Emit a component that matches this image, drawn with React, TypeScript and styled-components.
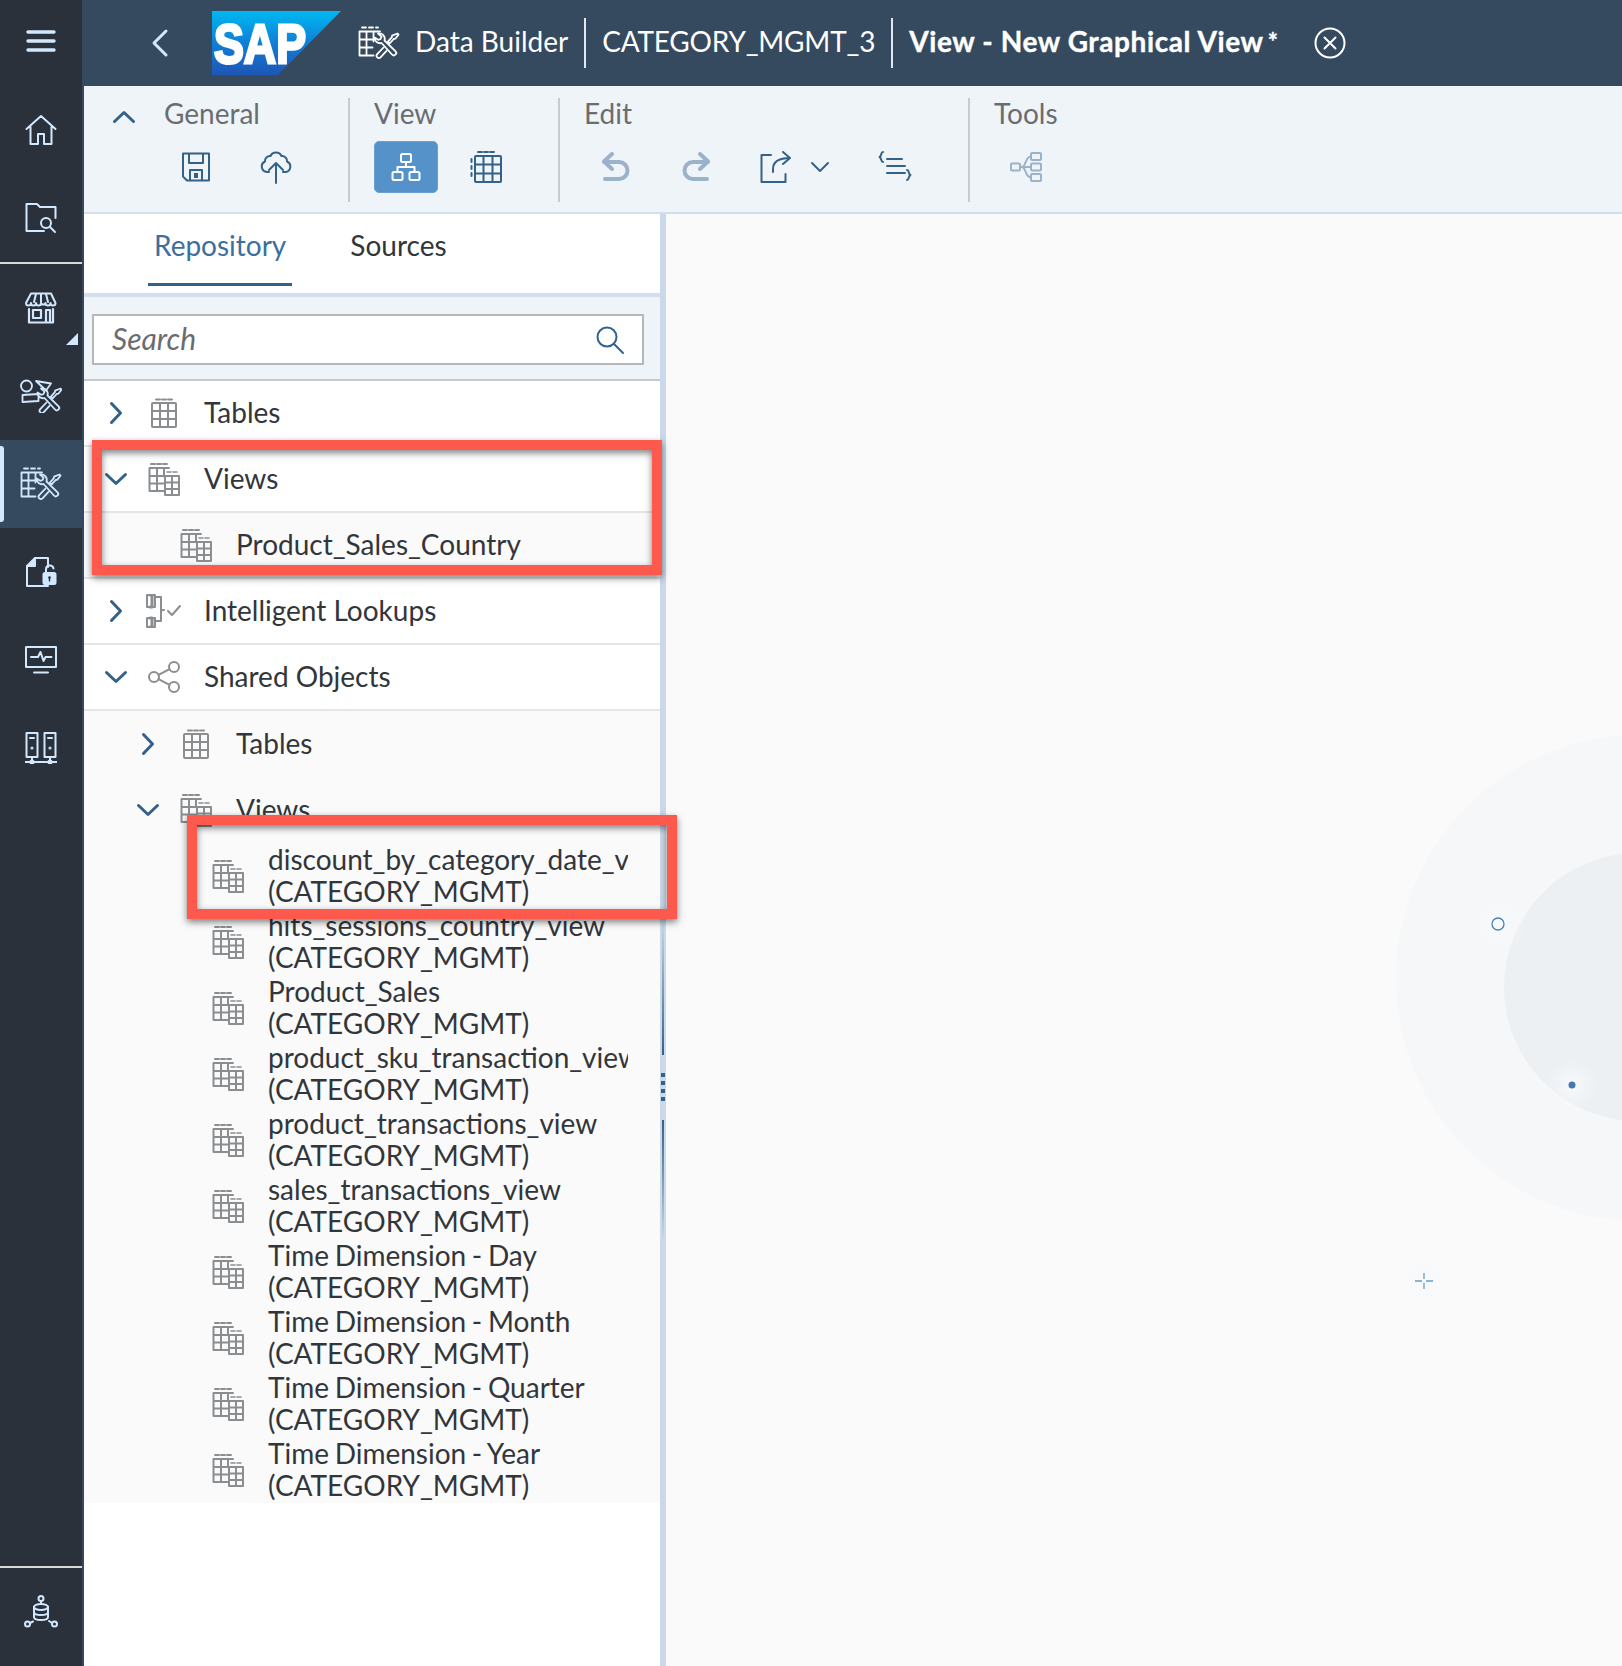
import React from 'react';
import styled, { createGlobalStyle } from 'styled-components';

const GlobalStyle = createGlobalStyle`
  html, body { margin: 0; padding: 0; background: #fff; }
  body { font-family: Lato, 'Noto Sans', 'Liberation Sans', sans-serif; color: #32363a; }
  * { box-sizing: border-box; }
`;

const Glyph: React.FC<{ w: number; h: number; vb?: string; sw?: number; children: React.ReactNode }> = ({ w, h, vb, sw = 2, children }) => (
  <svg width={w} height={h} viewBox={vb || `0 0 ${w} ${h}`} fill="none" stroke="currentColor" strokeWidth={sw} strokeLinecap="round" strokeLinejoin="round">
    {children}
  </svg>
);

/* wrench + screwdriver, drawn in a 26 box */
const ToolsShape = () => (
  <>
    <path d="M1.500 5.500a5.500 5.500 0 0 0 7 5.500L19 22.500a2.400 2.400 0 0 0 3.600-3.200L11.500 8.500a5.500 5.500 0 0 0-6.500-7l3.500 3.200-.9 2.300-2.300.8z" />
    <path d="M24.500 1.500l1 1.200-3.200 4-1.600.3-4 4.400-1.800-1.800 4-4.400.2-1.500zM10.500 15.500l-6.300 6.700a2.300 2.300 0 0 0 3.300 3.200l6-6.500" />
  </>
);

const BuilderIcon: React.FC<{ w?: number; h?: number }> = ({ w = 42, h = 34 }) => (
  <Glyph w={w} h={h} vb="0 0 42 34" sw={1.8}>
    <path d="M4 1.500h4M11 1.500h4M18 1.500h2" />
    <path d="M22 5.500H1.500v24h14M1.500 13.500h16M1.500 21.500h13M8.500 5.500v24M15.500 5.500v10" />
    <g transform="translate(15 6)"><ToolsShape /></g>
  </Glyph>
);

const TableIcon: React.FC<{ w?: number; h?: number }> = ({ w = 26, h = 30 }) => (
  <Glyph w={w} h={h} vb="0 0 26 30">
    <path d="M5 1.500h4M11 1.500h4M17 1.500h4" />
    <rect x="1" y="5" width="24" height="24" rx="1" />
    <path d="M9 5v24M17 5v24M1 13h24M1 21h24" />
  </Glyph>
);

const ViewIcon = () => (
  <Glyph w={32} h={34} vb="0 0 32 34">
    <path d="M3 2h4M9 2h4M15 2h4" />
    <path d="M21 6H1.500v23h14M1.500 14h15M1.500 21.500h14M9 6v23M16 6v8" />
    <path d="M19 10h4M25 10h4" strokeWidth="1.600" />
    <rect x="17" y="14" width="14" height="19" />
    <path d="M24 14v19M17 20.500h14M17 27h14" />
  </Glyph>
);

const LookupIcon = () => (
  <Glyph w={36} h={34} vb="0 0 36 34">
    <rect x="1" y="1" width="8" height="12" />
    <rect x="1" y="24" width="8" height="9" />
    <path d="M4 1h2v12H4M4 24h2v9H4" strokeWidth="3" />
    <path d="M9 3h6v24H9M15 16h3" />
    <path d="M22 17l4 4 8-9" />
  </Glyph>
);

const ShareIcon = () => (
  <Glyph w={32} h={32}>
    <circle cx="6" cy="16" r="5" />
    <circle cx="26" cy="6" r="5" />
    <circle cx="26" cy="26" r="5" />
    <path d="M10.500 13.800L21.500 8.200M10.500 18.200l11 5.600" />
  </Glyph>
);

const ChevronRight = () => (
  <Glyph w={14} h={24} sw={3}><path d="M2.500 2.500l9 9.500-9 9.500" /></Glyph>
);
const ChevronDown = () => (
  <Glyph w={24} h={14} sw={3}><path d="M2.500 2.500l9.500 9 9.500-9" /></Glyph>
);

const navIcons: React.ReactNode[] = [
  <Glyph key="home" w={32} h={32} vb="0 0 32 32">
    <path d="M1.500 15L16 2l14.500 13M5.500 13v17H13V20h6v10h7.500V13" />
  </Glyph>,
  <Glyph key="folder" w={32} h={32}>
    <path d="M19 29H1.500V2H12l3 3h15.500v11" />
    <circle cx="21" cy="21" r="5" />
    <path d="M25 25l5 5" />
  </Glyph>,
  <Glyph key="store" w={32} h={32}>
    <path d="M6 1.500h20l4.500 9.500a2.500 2.500 0 0 1-5 0 2.500 2.500 0 0 1-5 0 2.500 2.500 0 0 1-4.500 0 2.500 2.500 0 0 1-5 0 2.500 2.500 0 0 1-5 0 2.500 2.500 0 0 1-5 0zM11 2L9 10M16 2v8M21 2l2 8" />
    <path d="M4 17v13.500h24V17M8 18v8h8v-8zM21 30V18h4v12" strokeWidth="2.200" />
  </Glyph>,
  <Glyph key="modeler" w={42} h={34} vb="0 0 42 34" sw={1.800}>
    <circle cx="6.500" cy="7" r="5.500" />
    <path d="M16 2l15 2.500-5 7zM2.500 16l16-1v7l-16 1z" />
    <g transform="translate(16 8)"><ToolsShape /></g>
  </Glyph>,
  <BuilderIcon key="builder" />,
  <Glyph key="lock" w={32} h={32}>
    <path d="M23 11V2H10L2 10v20h21" />
    <path d="M2 10h8V2" fill="currentColor" />
    <rect x="18.500" y="17" width="12" height="11" rx="1.500" fill="currentColor" />
    <path d="M21 17v-3.500a3.800 3.800 0 0 1 7.500-1" />
    <circle cx="24.500" cy="21.500" r="1.300" fill="#2a313b" stroke="none" />
    <path d="M24.500 22v3" stroke="#2a313b" strokeWidth="1.400" />
  </Glyph>,
  <Glyph key="monitor" w={32} h={28}>
    <rect x="1" y="1" width="30" height="20" />
    <path d="M6 11h7l2.500-5 3 9 2-4h6M9 26.500h14" />
  </Glyph>,
  <Glyph key="servers" w={32} h={32}>
    <rect x="1.500" y="1" width="11" height="24" />
    <rect x="19.500" y="1" width="11" height="24" />
    <path d="M5 6h4M23 6h4M0 30h32M7 25v5M25 25v5" />
    <circle cx="7" cy="16" r=".6" />
    <circle cx="25" cy="16" r=".6" />
    <circle cx="7" cy="30" r="1.600" fill="currentColor" />
    <circle cx="25" cy="30" r="1.600" fill="currentColor" />
  </Glyph>,
];

const items = [
  'discount_by_category_date_view',
  'hits_sessions_country_view',
  'Product_Sales',
  'product_sku_transaction_view',
  'product_transactions_view',
  'sales_transactions_view',
  'Time Dimension - Day',
  'Time Dimension - Month',
  'Time Dimension - Quarter',
  'Time Dimension - Year',
];

const App: React.FC = () => (
  <Shell>
    <GlobalStyle />
    <Sidebar>
      <Burger>
        <Glyph w={30} h={24} sw={3.4}><path d="M2 3h26M2 12h26M2 21h26" /></Glyph>
      </Burger>
      {navIcons.map((icon, i) => (
        <NavItem key={i} $active={i === 4} $divided={i === 1} $flag={i === 2}>
          {icon}
        </NavItem>
      ))}
      <SideFooter>
        <Glyph w={34} h={34} sw={2}>
          <circle cx="17" cy="3.500" r="2.500" />
          <path d="M17 6v3" />
          <ellipse cx="17" cy="12" rx="7" ry="3" />
          <path d="M10 12v10c0 4 14 4 14 0V12M10 17c0 4 14 4 14 0" />
          <circle cx="3.500" cy="29" r="2.500" />
          <circle cx="30.500" cy="29" r="2.500" />
          <path d="M6 28l3-1.500M28 28l-3-2" />
        </Glyph>
      </SideFooter>
    </Sidebar>

    <Main>
      <Header>
        <BackButton>
          <Glyph w={20} h={30} sw={3}><path d="M16 3L4 15l12 12" /></Glyph>
        </BackButton>
        <Logo viewBox="0 0 130 64" width="130" height="64">
          <defs>
            <linearGradient id="sapGrad" x1="0" y1="0" x2="0" y2="1">
              <stop offset="0" stopColor="#00b8f1" />
              <stop offset="0.5" stopColor="#0f7fd6" />
              <stop offset="1" stopColor="#1e56b5" />
            </linearGradient>
          </defs>
          <polygon points="0,0 129,0 66,64 0,64" fill="url(#sapGrad)" />
          <text x="2" y="52" fontFamily="'Liberation Sans', sans-serif" fontWeight="700" fontSize="56" fill="#fff" stroke="#fff" strokeWidth="3" textLength="92" lengthAdjust="spacingAndGlyphs">SAP</text>
        </Logo>
        <HeaderIcon><BuilderIcon /></HeaderIcon>
        <Crumb>Data Builder</Crumb>
        <Crumb $sep $tight>CATEGORY_MGMT_3</Crumb>
        <Crumb $sep $bold>View - New Graphical View<Star>*</Star></Crumb>
        <CloseButton>
          <Glyph w={32} h={32}>
            <circle cx="16" cy="16" r="14.500" />
            <path d="M10.500 10.500l11 11M21.500 10.500l-11 11" />
          </Glyph>
        </CloseButton>
      </Header>

      <Toolbar>
        <Collapse>
          <Glyph w={24} h={14} sw={3}><path d="M2.500 11.500l9.500-9 9.500 9" /></Glyph>
        </Collapse>
        <ToolGroup $width={184} $first>
          <ToolLabel>General</ToolLabel>
          <ToolRow>
            <ToolButton>
              <Glyph w={30} h={30}>
                <path d="M2 1.500h26v27H6l-4-4zM8 2v9h14V2M9 28v-10h12v10" />
                <rect x="13" y="21" width="4" height="5" fill="currentColor" stroke="none" />
              </Glyph>
            </ToolButton>
            <ToolButton>
              <Glyph w={32} h={34}>
                <path d="M9 22H7a5.500 5.500 0 0 1-2-10.500A5 5 0 0 1 10.500 6a6 6 0 0 1 11 0 5 5 0 0 1 5.500 5.500A5.500 5.500 0 0 1 25.500 22H23" />
                <path d="M16 33V13M9 20l7-7 7 7" />
              </Glyph>
            </ToolButton>
          </ToolRow>
        </ToolGroup>
        <ToolGroup $width={210}>
          <ToolLabel>View</ToolLabel>
          <ToolRow>
            <ToolButton $active>
              <Glyph w={30} h={30}>
                <rect x="10" y="2" width="10" height="8" rx="1.500" />
                <rect x="1.500" y="20" width="10" height="8" rx="1.500" />
                <rect x="18.500" y="20" width="10" height="8" rx="1.500" />
                <path d="M15 10v5M6.500 20v-5h17v5" />
              </Glyph>
            </ToolButton>
            <ToolButton>
              <Glyph w={32} h={34}>
                <path d="M8 2h4M14 2h4M20 2h4M1.500 9v3M1.500 16v3M1.500 23v3" />
                <rect x="5" y="6" width="26" height="26" rx="1" />
                <path d="M13.500 6v26M22.500 6v26M5 14.500h26M5 23.500h26" />
              </Glyph>
            </ToolButton>
          </ToolRow>
        </ToolGroup>
        <ToolGroup $width={410}>
          <ToolLabel>Edit</ToolLabel>
          <ToolRow>
            <ToolButton $disabled>
              <Glyph w={30} h={30} sw={4}>
                <path d="M11 2L3 9.500l8 7.500M3 10h15a8.500 8.500 0 0 1 0 17H4" />
              </Glyph>
            </ToolButton>
            <ToolButton $disabled>
              <Glyph w={30} h={30} sw={4}>
                <path d="M19 2l8 7.500-8 7.500M27 10H12a8.500 8.500 0 0 0 0 17h14" />
              </Glyph>
            </ToolButton>
            <SplitButton>
              <SplitIcon>
                <Glyph w={32} h={32}>
                  <path d="M11 4H1.500v27h24v-8" />
                  <path d="M13 21v-3c0-7 5-11 17-11M23 1l7 6-7 6" />
                </Glyph>
              </SplitIcon>
              <Glyph w={20} h={12} sw={2}><path d="M2 2l8 8 8-8" /></Glyph>
            </SplitButton>
            <ToolButton>
              <Glyph w={34} h={32}>
                <path d="M5 1C2.500 1 4 5 1.500 6 4 7 2.500 11 5 11M9 8h15M9 15h18M9 22h18M29 19c2.500 0 1 4 3.500 5-2.500 1-1 5-3.500 5" />
              </Glyph>
            </ToolButton>
          </ToolRow>
        </ToolGroup>
        <ToolGroup $width={220}>
          <ToolLabel>Tools</ToolLabel>
          <ToolRow>
            <ToolButton $disabled>
              <Glyph w={32} h={32}>
                <rect x="1" y="12.500" width="9" height="7" rx="1" />
                <rect x="21" y="2" width="10" height="7" rx="1" />
                <rect x="21" y="12.500" width="10" height="7" rx="1" />
                <rect x="21" y="23" width="10" height="7" rx="1" />
                <path d="M10 16h11M21 5.500c-6 0-5 10.500-9 10.500 4 0 3 10.500 9 10.500" />
              </Glyph>
            </ToolButton>
          </ToolRow>
        </ToolGroup>
      </Toolbar>

      <Body>
        <Panel>
          <Tabs>
            <Tab $active>Repository</Tab>
            <Tab>Sources</Tab>
          </Tabs>
          <SearchBar>
            <SearchField>
              <SearchText>Search</SearchText>
              <SearchIcon>
                <Glyph w={30} h={30}>
                  <circle cx="12" cy="12" r="9.500" />
                  <path d="M19 19l9 9" />
                </Glyph>
              </SearchIcon>
            </SearchField>
          </SearchBar>

          <Row $divider>
            <Caret><ChevronRight /></Caret>
            <RowIcon><TableIcon /></RowIcon>
            <RowLabel>Tables</RowLabel>
          </Row>
          <Row $divider>
            <Caret><ChevronDown /></Caret>
            <RowIcon><ViewIcon /></RowIcon>
            <RowLabel>Views</RowLabel>
          </Row>
          <Row $level={1} $child $divider>
            <Caret />
            <RowIcon><ViewIcon /></RowIcon>
            <RowLabel>Product_Sales_Country</RowLabel>
          </Row>
          <Row $divider>
            <Caret><ChevronRight /></Caret>
            <RowIcon><LookupIcon /></RowIcon>
            <RowLabel>Intelligent Lookups</RowLabel>
          </Row>
          <Row $divider>
            <Caret><ChevronDown /></Caret>
            <RowIcon><ShareIcon /></RowIcon>
            <RowLabel>Shared Objects</RowLabel>
          </Row>
          <Row $level={1} $child>
            <Caret><ChevronRight /></Caret>
            <RowIcon><TableIcon /></RowIcon>
            <RowLabel>Tables</RowLabel>
          </Row>
          <Row $level={1} $child>
            <Caret><ChevronDown /></Caret>
            <RowIcon><ViewIcon /></RowIcon>
            <RowLabel>Views</RowLabel>
          </Row>
          {items.map(name => (
            <Row key={name} $level={2} $child>
              <Caret />
              <RowIcon><ViewIcon /></RowIcon>
              <TwoLines>
                <NameLine>{name}</NameLine>
                <NameLine>(CATEGORY_MGMT)</NameLine>
              </TwoLines>
            </Row>
          ))}
        </Panel>

        <Splitter>
          <SplitLine $dir="top" />
          <Grip><i /><i /><i /><i /></Grip>
          <SplitLine $dir="bottom" />
        </Splitter>

        <Canvas>
          <CanvasArt width="956" height="1452" viewBox="0 0 956 1452">
            <defs>
              <radialGradient id="halo">
                <stop offset="0" stopColor="#f7f9fb" />
                <stop offset="1" stopColor="#f7f9fb" stopOpacity="0" />
              </radialGradient>
            </defs>
            <circle cx="973" cy="764" r="243" fill="#f5f7f9" />
            <circle cx="972" cy="773" r="134" fill="#ecf0f3" />
            <circle cx="832" cy="710" r="28" fill="url(#halo)" />
            <circle cx="832" cy="710" r="6" fill="none" stroke="#4a80b5" strokeWidth="1.300" />
            <circle cx="906" cy="871" r="26" fill="url(#halo)" />
            <circle cx="906" cy="871" r="3.500" fill="#3f79ae" />
            <circle cx="758" cy="1067" r="28" fill="url(#halo)" />
            <path d="M749 1067h7M760 1067h7M758 1059v6M758 1069v6" stroke="#6a9cc7" strokeWidth="1.300" />
          </CanvasArt>
        </Canvas>
      </Body>
    </Main>

    <Callout $x={92} $y={440} $w={570} $h={135} />
    <Callout $x={187} $y={815} $w={490} $h={104} />
  </Shell>
);

export default App;

const Shell = styled.div`
  position: relative;
  display: flex;
  width: 1622px;
  height: 1666px;
  overflow: hidden;
`;

const Sidebar = styled.nav`
  display: flex;
  flex-direction: column;
  flex: 0 0 84px;
  background: #2a313b;
  border-right: 2px solid #354a5f;
  color: #d1e8ff;
`;

const Burger = styled.div`
  display: flex;
  align-items: center;
  justify-content: center;
  height: 86px;
  padding-bottom: 4px;
`;

const NavItem = styled.div<{ $active?: boolean; $divided?: boolean; $flag?: boolean }>`
  position: relative;
  display: flex;
  align-items: center;
  justify-content: center;
  height: ${({ $divided }) => ($divided ? '90px' : '88px')};
  background: ${({ $active }) => ($active ? '#354a5f' : 'transparent')};
  border-bottom: ${({ $divided }) => ($divided ? '2px solid #d9d9d9' : 'none')};

  ${({ $active }) =>
    $active &&
    `&::before {
      content: '';
      position: absolute;
      left: 0;
      top: 6px;
      bottom: 6px;
      width: 4px;
      background: #d1e8ff;
      border-radius: 0 3px 3px 0;
    }`}

  ${({ $flag }) =>
    $flag &&
    `&::after {
      content: '';
      position: absolute;
      right: 4px;
      bottom: 7px;
      border-style: solid;
      border-width: 0 0 12px 12px;
      border-color: transparent transparent #d1e8ff transparent;
    }`}
`;

const SideFooter = styled.div`
  display: flex;
  align-items: center;
  justify-content: center;
  height: 90px;
  margin-top: auto;
  margin-bottom: 10px;
  border-top: 2px solid #d9d9d9;
`;

const Main = styled.div`
  display: flex;
  flex-direction: column;
  flex: 1;
  min-width: 0;
`;

const Header = styled.header`
  display: flex;
  align-items: center;
  flex: 0 0 86px;
  background: #354a5f;
  color: #fff;
`;

const BackButton = styled.div`
  display: flex;
  justify-content: center;
  width: 20px;
  margin-left: 66px;
  color: #d1e8ff;
`;

const Logo = styled.svg`
  margin-left: 42px;
  flex: none;
`;

const HeaderIcon = styled.div`
  display: flex;
  margin-left: 16px;
`;

const Crumb = styled.div<{ $sep?: boolean; $bold?: boolean; $tight?: boolean }>`
  display: flex;
  align-items: center;
  height: 50px;
  padding: 0 16px 4px ${({ $sep }) => ($sep ? '16px' : '15px')};
  border-left: ${({ $sep }) => ($sep ? '2px solid #e5e9ed' : 'none')};
  font-size: 28px;
  font-weight: ${({ $bold }) => ($bold ? 700 : 400)};
  letter-spacing: ${({ $bold, $tight }) => ($bold ? '0.6px' : $tight ? '-0.2px' : '0')};
  -webkit-text-stroke: ${({ $bold }) => ($bold ? '0.4px #fff' : '0')};
  white-space: nowrap;
`;

const Star = styled.span`
  margin-left: 4px;
  font-size: 24px;
`;

const CloseButton = styled.div`
  display: flex;
  margin-left: 20px;
`;

const Toolbar = styled.div`
  display: flex;
  flex: 0 0 128px;
  padding-top: 12px;
  background: #eff4f9;
  border-bottom: 2px solid #d1dfee;
`;

const Collapse = styled.div`
  display: flex;
  justify-content: center;
  width: 80px;
  padding-top: 12px;
  color: #346187;
`;

const ToolGroup = styled.div<{ $width: number; $first?: boolean }>`
  width: ${({ $width }) => $width}px;
  height: 104px;
  padding-left: ${({ $first }) => ($first ? '0' : '24px')};
  border-left: ${({ $first }) => ($first ? 'none' : '2px solid #c7cbd0')};
`;

const ToolLabel = styled.div`
  height: 32px;
  line-height: 30px;
  font-size: 28px;
  color: #6a6d70;
`;

const ToolRow = styled.div`
  display: flex;
  gap: 16px;
  margin-top: 11px;
`;

const ToolButton = styled.div<{ $active?: boolean; $disabled?: boolean }>`
  display: flex;
  align-items: center;
  justify-content: center;
  width: 64px;
  height: 52px;
  border-radius: 5px;
  background: ${({ $active }) => ($active ? '#5592c9' : 'transparent')};
  border: ${({ $active }) => ($active ? '1px solid #6ba0d2' : 'none')};
  color: ${({ $active, $disabled }) => ($active ? '#fff' : $disabled ? '#9ab2ca' : '#346187')};
`;

const SplitButton = styled.div`
  display: flex;
  align-items: center;
  width: 103px;
  height: 52px;
  color: #346187;
`;

const SplitIcon = styled.div`
  display: flex;
  justify-content: center;
  width: 64px;
  margin-right: 2px;
`;

const Body = styled.div`
  display: flex;
  flex: 1;
  min-height: 0;
`;

const Panel = styled.section`
  flex: 0 0 576px;
  background: #fff;
`;

const Tabs = styled.div`
  display: flex;
  gap: 52px;
  height: 83px;
  padding-left: 64px;
  border-bottom: 4px solid #d1dfee;
`;

const Tab = styled.div<{ $active?: boolean }>`
  height: 72px;
  padding: 13px 6px 0;
  font-size: 28px;
  line-height: 36px;
  color: ${({ $active }) => ($active ? '#3c6f9e' : '#32363a')};
  border-bottom: ${({ $active }) => ($active ? '3px solid #346187' : 'none')};
`;

const SearchBar = styled.div`
  height: 84px;
  padding: 17px 16px 0 8px;
  background: #eff4f9;
  border-bottom: 2px solid #c6c9cc;
`;

const SearchField = styled.div`
  display: flex;
  align-items: center;
  justify-content: space-between;
  height: 51px;
  padding: 0 17px 0 18px;
  background: #fff;
  border: 2px solid #b5b8bb;
`;

const SearchText = styled.span`
  padding-bottom: 3px;
  font-size: 30px;
  font-style: italic;
  color: #6a6d70;
`;

const SearchIcon = styled.span`
  display: flex;
  color: #2f628f;
`;

const Row = styled.div<{ $level?: number; $child?: boolean; $divider?: boolean }>`
  display: flex;
  align-items: center;
  height: 66px;
  padding-left: ${({ $level }) => ($level || 0) * 32}px;
  background: ${({ $child }) => ($child ? '#fafafa' : '#fff')};
  border-bottom: ${({ $divider }) => ($divider ? '2px solid #e5e5e5' : 'none')};
`;

const Caret = styled.div`
  display: flex;
  align-items: center;
  justify-content: center;
  flex: 0 0 64px;
  color: #346187;
`;

const RowIcon = styled.div`
  display: flex;
  align-items: center;
  justify-content: center;
  flex: 0 0 32px;
  min-width: 0;
  margin-right: 24px;
  color: #8b8e91;

  svg {
    flex: none;
  }
`;

const RowLabel = styled.div`
  padding-bottom: 3px;
  font-size: 28px;
  line-height: 32px;
  color: #32363a;
  white-space: nowrap;
`;

const TwoLines = styled.div`
  width: 360px;
  padding-bottom: 3px;
  overflow: hidden;
`;

const NameLine = styled.div`
  font-size: 28px;
  line-height: 32px;
  word-spacing: -1.5px;
  white-space: nowrap;
  overflow: hidden;
`;

const Splitter = styled.div`
  display: flex;
  flex-direction: column;
  align-items: center;
  flex: 0 0 6px;
  background: #c9d9e9;
  padding-top: 706px;
`;

const SplitLine = styled.div<{ $dir: 'top' | 'bottom' }>`
  width: 2px;
  height: ${({ $dir }) => ($dir === 'top' ? 135 : 121)}px;
  background: linear-gradient(
    ${({ $dir }) => ($dir === 'top' ? 'to bottom' : 'to top')},
    #c9d9e9,
    #346187
  );
`;

const Grip = styled.div`
  display: flex;
  flex-direction: column;
  gap: 4px;
  margin: 18px 0 19px;

  i {
    display: block;
    width: 4px;
    height: 4px;
    background: #346187;
  }
`;

const Canvas = styled.div`
  position: relative;
  flex: 1;
  background: #fafafa;
  overflow: hidden;
`;

const CanvasArt = styled.svg`
  position: absolute;
  top: 0;
  left: 0;
`;

const Callout = styled.div.attrs<{ $x: number; $y: number; $w: number; $h: number }>(({ $x, $y, $w, $h }) => ({
  style: { left: $x, top: $y, width: $w, height: $h },
}))<{ $x: number; $y: number; $w: number; $h: number }>`
  position: absolute;
  border: 10px solid #fd5a4d;
  box-shadow: 0 3px 7px rgba(0, 0, 0, 0.5), inset 0 3px 7px rgba(0, 0, 0, 0.5);
  pointer-events: none;
`;
